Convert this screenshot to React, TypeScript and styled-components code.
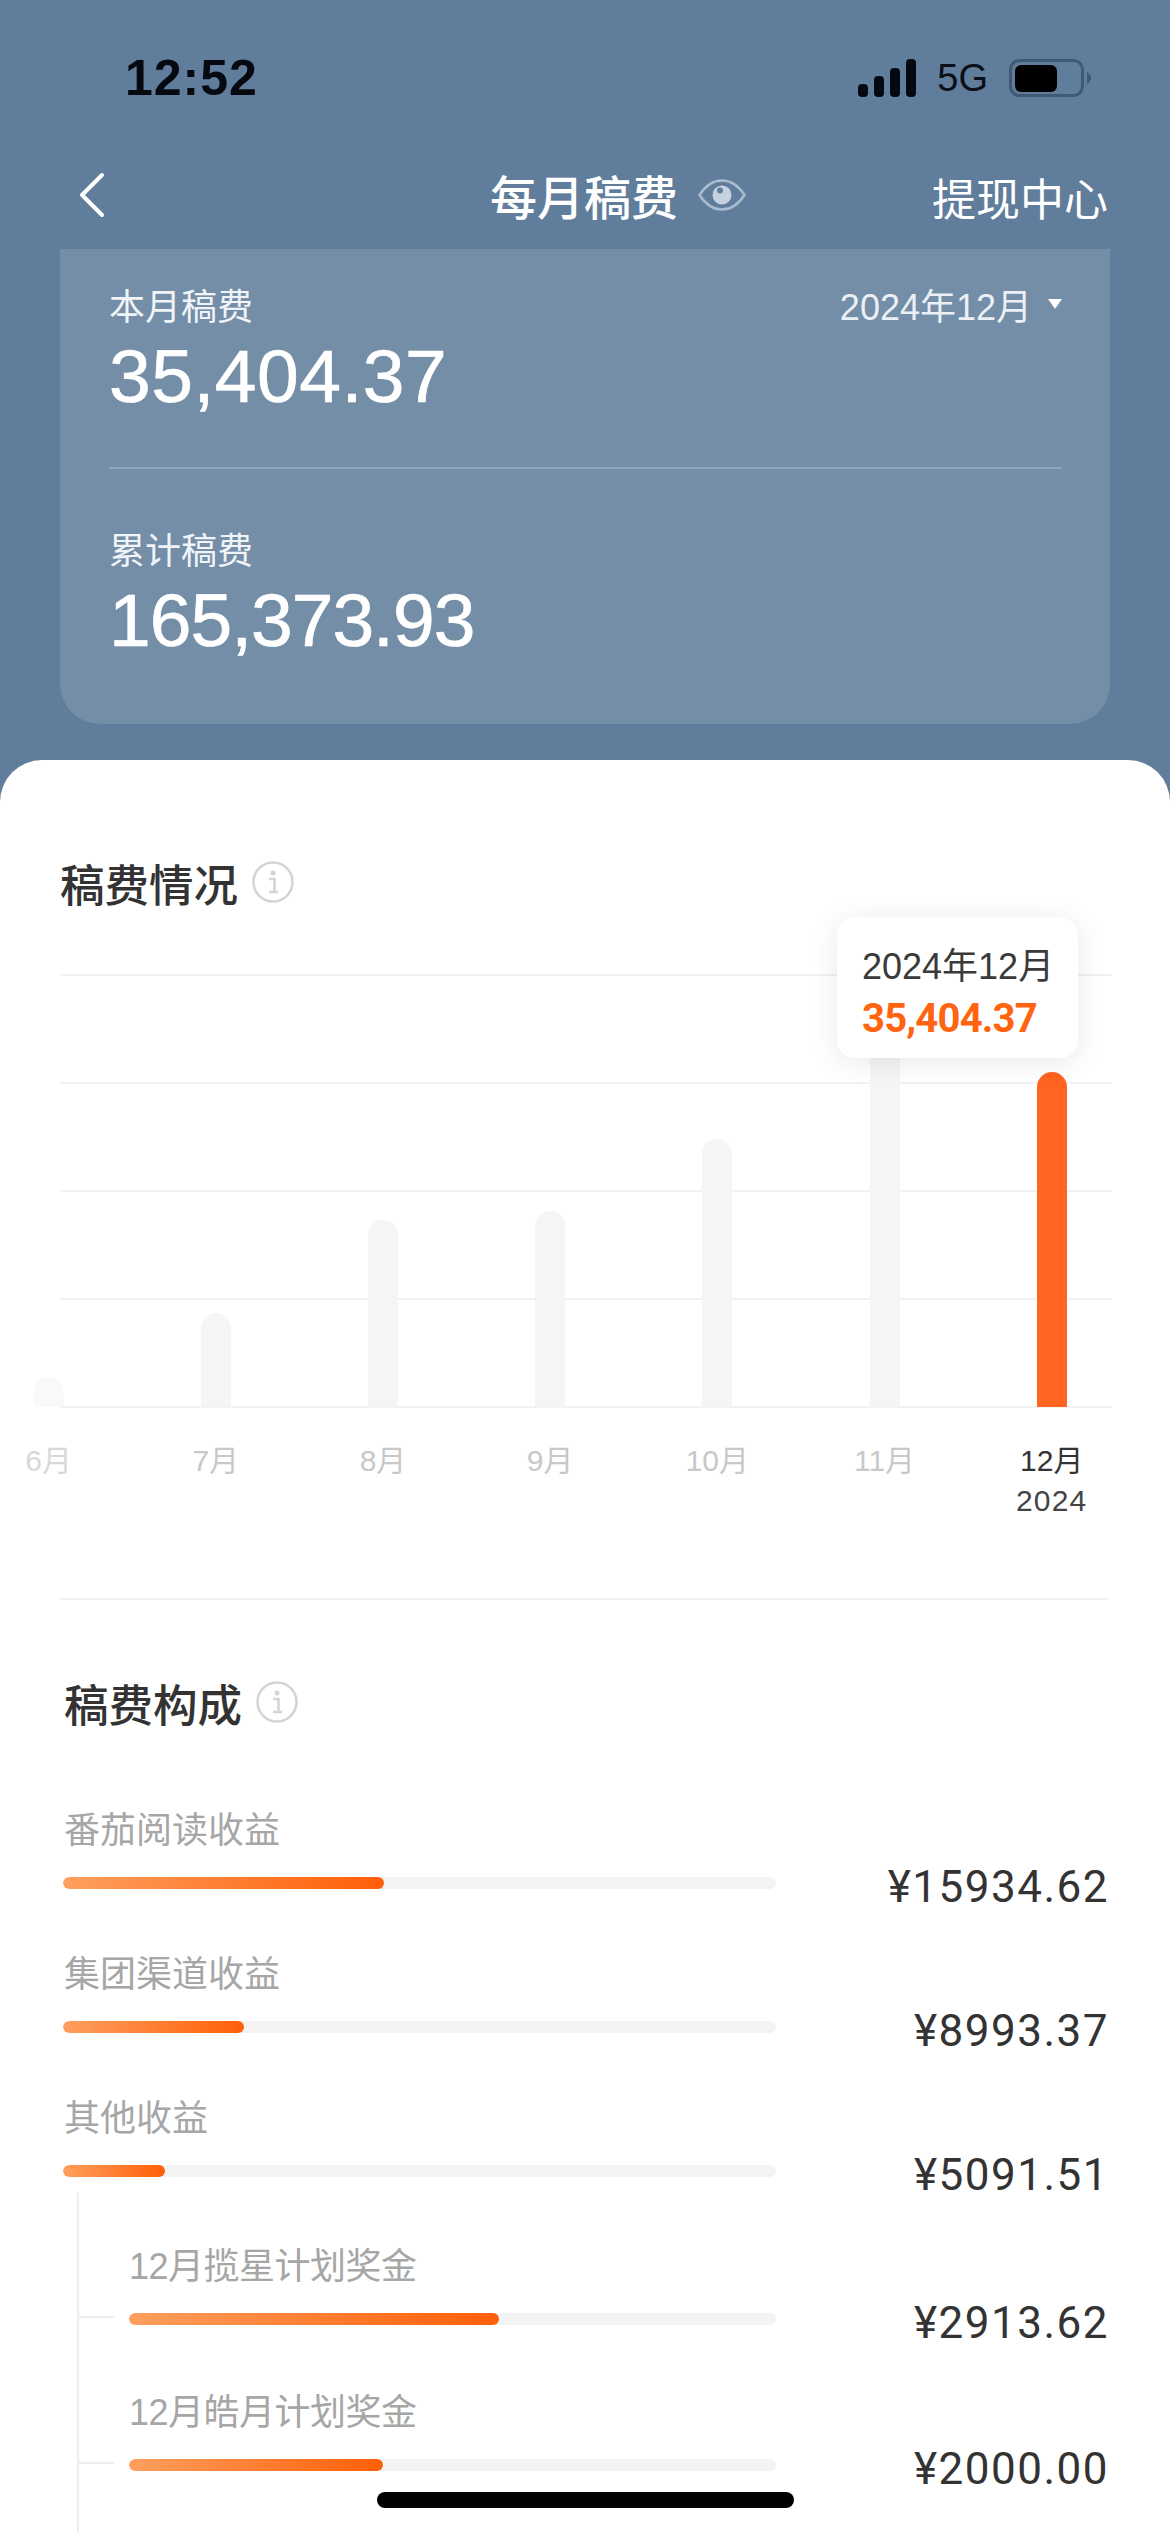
import React from 'react';
import styled, { createGlobalStyle } from 'styled-components';

const GlobalStyle = createGlobalStyle`
  html, body {
    margin: 0;
    padding: 0;
    background: #607d9b;
  }
  * {
    box-sizing: border-box;
  }
`;

const CJK = `"Liberation Sans", "Noto Sans CJK SC", sans-serif`;
const DIGITS = `Roboto, "Noto Sans CJK SC", sans-serif`;

const Page = styled.div`
  position: relative;
  width: 1170px;
  height: 2532px;
  overflow: hidden;
  background: #607d9b;
  font-family: ${CJK};
`;

const StatusBar = styled.div`
  height: 156px;
  display: flex;
  align-items: center;
  justify-content: space-between;
  padding: 0 79px 0 125px;
`;

const Clock = styled.div`
  font-size: 50px;
  font-weight: 700;
  letter-spacing: 1px;
  color: #060a10;
`;

const StatusIcons = styled.div`
  display: flex;
  align-items: center;
  gap: 21px;
`;

const Network = styled.span`
  font-size: 38px;
  color: #0a0f18;
`;

const Header = styled.div`
  height: 93px;
  padding: 0 62px 16px 78px;
  display: flex;
  align-items: center;
  color: #fff;
`;

const TitleGroup = styled.div`
  display: flex;
  align-items: center;
  gap: 20px;
  margin-left: 384px;
`;

const Title = styled.div`
  font-size: 47px;
  font-weight: 500;
`;

const Withdraw = styled.div`
  margin: 4px 0 0 auto;
  font-size: 44px;
`;

const SummaryCard = styled.div`
  margin: 0 60px;
  height: 475px;
  padding: 39px 48px 0 49px;
  background: #738ea6;
  border-radius: 0 0 40px 40px;
  color: #fff;
`;

const SummaryTop = styled.div`
  display: flex;
  justify-content: space-between;
`;

const SummaryLabel = styled.div`
  font-size: 36px;
  line-height: 40px;
  color: #f0f4f8;
`;

const DatePicker = styled.div`
  display: flex;
  align-items: flex-start;
  gap: 16px;
  font-size: 36px;
  line-height: 40px;
  color: #eaf0f5;
`;

const Caret = styled.span`
  width: 0;
  height: 0;
  margin-top: 11px;
  border-left: 7px solid transparent;
  border-right: 7px solid transparent;
  border-top: 10px solid #fff;
`;

const SummaryValue = styled.div<{ $spacing: number }>`
  font-size: 75px;
  line-height: 80px;
  margin-top: 8px;
  letter-spacing: ${(p) => p.$spacing}px;
  -webkit-text-stroke: 0.7px #fff;
`;

const SummaryDivider = styled.div`
  height: 2px;
  margin: 51px 0 63px;
  background: #8ea6bb;
`;

const Sheet = styled.div`
  margin-top: 36px;
  height: 1772px;
  overflow: hidden;
  background: #fff;
  border-radius: 42px 42px 0 0;
`;

const SectionTitle = styled.div<{ $left: number }>`
  display: flex;
  align-items: center;
  gap: 14px;
  height: 60px;
  margin-left: ${(p) => p.$left}px;
  font-size: 44.5px;
  font-weight: 500;
  color: #333;
`;

const ChartSection = styled.div`
  padding-top: 92px;
`;

const Plot = styled.div`
  position: relative;
  margin-top: 62px;
  height: 624px;
`;

const GridLines = styled.div`
  position: absolute;
  top: 0;
  left: 60px;
  width: 1052px;
  height: 434px;
  display: flex;
  flex-direction: column;
  justify-content: space-between;
`;

const GridLine = styled.div`
  height: 2px;
  background: #f2f2f2;
`;

const Columns = styled.div`
  position: relative;
  margin-left: -35px;
  display: grid;
  grid-template-columns: repeat(7, 167.2px);
`;

const Column = styled.div`
  display: flex;
  flex-direction: column;
  align-items: center;
`;

const BarSlot = styled.div`
  height: 433px;
  display: flex;
  align-items: flex-end;
`;

const Bar = styled.div<{ $active?: boolean; $faded?: boolean }>`
  width: 30px;
  border-radius: 15px 15px 0 0;
  background: ${(p) => (p.$active ? '#ff6420' : '#f5f5f5')};
  opacity: ${(p) => (p.$faded ? 0.6 : 1)};
`;

const MonthLabel = styled.div<{ $active?: boolean; $faded?: boolean }>`
  margin-top: 34px;
  height: 40px;
  font-size: 30px;
  line-height: 40px;
  color: ${(p) => (p.$active ? '#333' : '#c8c8c8')};
  opacity: ${(p) => (p.$faded ? 0.7 : 1)};
`;

const YearLabel = styled.div`
  font-size: 30px;
  line-height: 40px;
  letter-spacing: 1.2px;
  color: #444;
`;

const Tooltip = styled.div`
  position: absolute;
  top: -57px;
  left: 837px;
  width: 241px;
  height: 141px;
  padding: 30px 0 0 25px;
  background: #fff;
  border-radius: 18px;
  box-shadow: 0 4px 30px rgba(0, 0, 0, 0.09);
`;

const TooltipDate = styled.div`
  font-size: 36px;
  line-height: 40px;
  color: #3a3a3a;
`;

const TooltipValue = styled.div`
  margin-top: 12px;
  font-family: ${DIGITS};
  font-size: 40px;
  line-height: 40px;
  font-weight: 700;
  letter-spacing: -0.8px;
  color: #ff6410;
`;

const SectionDivider = styled.div`
  height: 2px;
  margin: 0 62px 0 60px;
  background: #f0f0f0;
`;

const BreakdownSection = styled.div`
  padding: 72px 61px 0 63px;
`;

const Rows = styled.div`
  margin-top: 74px;
`;

const Row = styled.div`
  position: relative;
  padding-bottom: 61px;
`;

const RowLabel = styled.div`
  margin-left: 1px;
  font-size: 36px;
  line-height: 50px;
  color: #a6a6a6;
`;

const SubLabel = styled(RowLabel)`
  margin-left: 0;
  letter-spacing: -0.5px;
`;

const BarLine = styled.div`
  margin-top: 21px;
  height: 12px;
  display: flex;
  align-items: center;
`;

const Track = styled.div<{ $width: number }>`
  flex: none;
  width: ${(p) => p.$width}px;
  height: 12px;
  border-radius: 6px;
  background: #f3f3f3;
  overflow: hidden;
`;

const Fill = styled.div<{ $width: number }>`
  width: ${(p) => p.$width}px;
  height: 100%;
  border-radius: 6px;
  background: linear-gradient(90deg, #ff9f5e, #ff5f08);
`;

const Amount = styled.div`
  flex: 1;
  margin-top: 8px;
  text-align: right;
  font-family: ${DIGITS};
  font-size: 44px;
  line-height: 50px;
  letter-spacing: 1.5px;
  color: #333;
`;

const SubList = styled.div`
  margin: -45px 0 0 14px;
  padding: 49px 0 0 50px;
  border-left: 2px solid #eeeeee;
  height: 400px;
`;

const SubRow = styled(Row)`
  padding-bottom: 63px;

  &::before {
    content: '';
    position: absolute;
    top: 74px;
    left: -50px;
    width: 35px;
    height: 2px;
    background: #eeeeee;
  }
`;

const HomeIndicator = styled.div`
  position: absolute;
  left: 377px;
  top: 2492px;
  width: 417px;
  height: 16px;
  border-radius: 8px;
  background: #000;
`;

const SignalIcon = () => (
  <svg width="58" height="38" viewBox="0 0 58 38">
    <rect x="0" y="25" width="10" height="13" rx="4" fill="#060a10" />
    <rect x="16" y="17" width="10" height="21" rx="4" fill="#060a10" />
    <rect x="32" y="9" width="10" height="29" rx="4" fill="#060a10" />
    <rect x="48" y="0" width="10" height="38" rx="4" fill="#060a10" />
  </svg>
);

const BatteryIcon = () => (
  <svg width="82" height="38" viewBox="0 0 82 38">
    <rect x="1.5" y="1.5" width="72" height="35" rx="9" fill="none" stroke="#3f5a72" strokeWidth="3" />
    <rect x="6" y="6" width="42" height="27" rx="6" fill="#000" />
    <path d="M78 13 C81 15 82 17 82 19 C82 21 81 23 78 25 Z" fill="#3f5a72" />
  </svg>
);

const BackIcon = () => (
  <svg width="28" height="46" viewBox="0 0 28 46">
    <path d="M24 3 L4 23 L24 43" fill="none" stroke="#fff" strokeWidth="4" strokeLinecap="round" strokeLinejoin="round" />
  </svg>
);

const EyeIcon = () => (
  <svg width="48" height="32" viewBox="0 0 48 32">
    <path d="M1.5 16 C8 6 15 1.5 24 1.5 C33 1.5 40 6 46.5 16 C40 26 33 30.5 24 30.5 C15 30.5 8 26 1.5 16 Z" fill="none" stroke="#a9bcd0" strokeWidth="2.5" />
    <circle cx="24" cy="16" r="9.5" fill="#c4d2e0" />
    <circle cx="22" cy="11.5" r="3" fill="#607d9b" />
  </svg>
);

const InfoIcon = () => (
  <svg width="42" height="42" viewBox="0 0 42 42">
    <circle cx="21" cy="21" r="19.5" fill="none" stroke="#d4d4d4" strokeWidth="2.5" />
    <circle cx="21" cy="12" r="2.5" fill="#d4d4d4" />
    <path d="M17 18 H22.5 V30 M17 31 H26" fill="none" stroke="#d4d4d4" strokeWidth="2.5" />
  </svg>
);

const months = [
  { label: '6月', height: 30, faded: true },
  { label: '7月', height: 94 },
  { label: '8月', height: 187 },
  { label: '9月', height: 196 },
  { label: '10月', height: 268 },
  { label: '11月', height: 365 },
  { label: '12月', height: 335, active: true },
];

const mainRows = [
  { label: '番茄阅读收益', fill: 321, amount: '¥15934.62' },
  { label: '集团渠道收益', fill: 181, amount: '¥8993.37' },
  { label: '其他收益', fill: 102, amount: '¥5091.51' },
];

const subRows = [
  { label: '12月揽星计划奖金', fill: 370, amount: '¥2913.62' },
  { label: '12月皓月计划奖金', fill: 254, amount: '¥2000.00' },
];

export default function App() {
  return (
    <Page>
      <GlobalStyle />
      <StatusBar>
        <Clock>12:52</Clock>
        <StatusIcons>
          <SignalIcon />
          <Network>5G</Network>
          <BatteryIcon />
        </StatusIcons>
      </StatusBar>
      <Header>
        <BackIcon />
        <TitleGroup>
          <Title>每月稿费</Title>
          <EyeIcon />
        </TitleGroup>
        <Withdraw>提现中心</Withdraw>
      </Header>
      <SummaryCard>
        <SummaryTop>
          <SummaryLabel>本月稿费</SummaryLabel>
          <DatePicker>
            2024年12月
            <Caret />
          </DatePicker>
        </SummaryTop>
        <SummaryValue $spacing={0.5}>35,404.37</SummaryValue>
        <SummaryDivider />
        <SummaryLabel>累计稿费</SummaryLabel>
        <SummaryValue $spacing={-1}>165,373.93</SummaryValue>
      </SummaryCard>
      <Sheet>
        <ChartSection>
          <SectionTitle $left={60}>
            稿费情况
            <InfoIcon />
          </SectionTitle>
          <Plot>
            <GridLines>
              <GridLine />
              <GridLine />
              <GridLine />
              <GridLine />
              <GridLine />
            </GridLines>
            <Columns>
              {months.map((m) => (
                <Column key={m.label}>
                  <BarSlot>
                    <Bar $active={m.active} $faded={m.faded} style={{ height: m.height }} />
                  </BarSlot>
                  <MonthLabel $active={m.active} $faded={m.faded}>
                    {m.label}
                  </MonthLabel>
                  {m.active && <YearLabel>2024</YearLabel>}
                </Column>
              ))}
            </Columns>
            <Tooltip>
              <TooltipDate>2024年12月</TooltipDate>
              <TooltipValue>35,404.37</TooltipValue>
            </Tooltip>
          </Plot>
        </ChartSection>
        <SectionDivider />
        <BreakdownSection>
          <SectionTitle $left={1}>
            稿费构成
            <InfoIcon />
          </SectionTitle>
          <Rows>
            {mainRows.map((r) => (
              <Row key={r.label}>
                <RowLabel>{r.label}</RowLabel>
                <BarLine>
                  <Track $width={713}>
                    <Fill $width={r.fill} />
                  </Track>
                  <Amount>{r.amount}</Amount>
                </BarLine>
              </Row>
            ))}
            <SubList>
              {subRows.map((r) => (
                <SubRow key={r.label}>
                  <SubLabel>{r.label}</SubLabel>
                  <BarLine>
                    <Track $width={647}>
                      <Fill $width={r.fill} />
                    </Track>
                    <Amount>{r.amount}</Amount>
                  </BarLine>
                </SubRow>
              ))}
            </SubList>
          </Rows>
        </BreakdownSection>
      </Sheet>
      <HomeIndicator />
    </Page>
  );
}
